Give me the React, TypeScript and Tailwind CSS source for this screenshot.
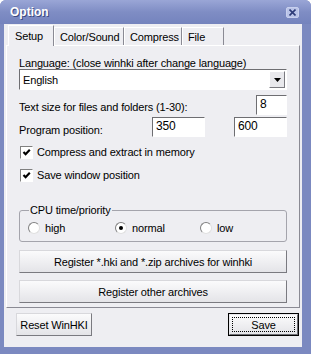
import type { ReactNode } from "react";

const font = { fontFamily: '"Liberation Sans", Arial, sans-serif' };

function Tab({ label, active, w }: { label: string; active?: boolean; w: string }) {
  return (
    <div
      className={
        active
          ? `${w} relative z-10 -mb-px h-[21px] border-l border-t border-r border-l-white border-t-white border-r-[#8a8a94] bg-[#eeeef2] pl-[6px] pt-[4px] leading-[13px]`
          : `${w} mt-[2px] h-[18px] border-t border-r border-l border-l-white border-t-white border-r-[#8a8a94] bg-[#eeeef2] pl-[5px] pt-[3px] leading-[13px]`
      }
    >
      {label}
    </div>
  );
}

function Field({ value, w }: { value: string; w: string }) {
  return (
    <div
      className={`${w} h-[20px] border border-t-[#6e6e72] border-l-[#6e6e72] border-r-white border-b-white bg-white pl-[3px] pt-px text-[12px] leading-[14px]`}
    >
      {value}
    </div>
  );
}

function Check({ label }: { label: string }) {
  return (
    <div className="flex h-[16px] items-center gap-[4px]">
      <div className="flex h-[13px] w-[13px] items-center justify-center border border-t-[#808080] border-l-[#808080] border-r-white border-b-white bg-white">
        <svg width="9" height="9" viewBox="0 0 9 9">
          <path d="M1.5 4 L3.6 6.2 L7.8 1.8" stroke="#000" strokeWidth="2.2" fill="none" />
        </svg>
      </div>
      <span className="leading-[14px]">{label}</span>
    </div>
  );
}

function Radio({ label, on }: { label: string; on?: boolean }) {
  return (
    <div className="flex h-[14px] items-center gap-[5px]">
      <div className="flex h-[12px] w-[12px] items-center justify-center rounded-full border border-t-[#808080] border-l-[#808080] border-r-[#e0e0e0] border-b-[#e0e0e0] bg-white">
        {on && <div className="h-[4px] w-[4px] rounded-full bg-black" />}
      </div>
      <span className="leading-[14px]">{label}</span>
    </div>
  );
}

function Button({ children, className = "" }: { children: ReactNode; className?: string }) {
  return (
    <div
      className={`flex h-[23px] items-center justify-center whitespace-nowrap border border-t-[#d8d8dc] border-l-[#d8d8dc] border-r-[#7a7a80] border-b-[#7a7a80] bg-gradient-to-b from-[#fbfbfc] to-[#e4e4e8] leading-[14px] ${className}`}
    >
      {children}
    </div>
  );
}

export default function App() {
  return (
    <div style={font} className="flex h-[354px] w-[311px] flex-col overflow-hidden rounded-t-[6px] bg-[#7b89c0]">
      {/* title bar */}
      <div className="flex h-[24px] items-center justify-between bg-gradient-to-b from-[#9aa6d6] via-[#7f8dc4] to-[#7483bd] pl-[10px] pr-[12px]">
        <span className="text-[12px] font-bold text-white [text-shadow:1px_1px_0_#3c4a80]">Option</span>
        <div className="flex h-[11px] w-[13px] items-center justify-center rounded-[2px] border border-[#c8d0ee] bg-[#b9c3e8]">
          <svg width="7" height="7" viewBox="0 0 7 7">
            <path d="M0.5 0.5 L6.5 6.5 M6.5 0.5 L0.5 6.5" stroke="#2e3c78" strokeWidth="1.6" />
          </svg>
        </div>
      </div>

      {/* client */}
      <div className="ml-[4px] mr-[9px] mb-[7px] flex flex-1 flex-col bg-[#eeeef2] px-[2px] text-[11px] tracking-[-0.15px] text-black">
        {/* tabs */}
        <div className="flex items-start pl-[2px] pt-px">
          <Tab label="Setup" active w="w-[46px]" />
          <Tab label="Color/Sound" w="w-[70px]" />
          <Tab label="Compress" w="w-[58px]" />
          <Tab label="File" w="w-[42px]" />
        </div>

        {/* panel */}
        <div className="flex flex-col border border-t-white border-l-white border-r-[#8a8a94] border-b-[#8a8a94] pl-[12px] pr-[12px] pt-[11px] pb-[4px]">
          <div className="h-[13px] leading-[13px]">Language: (close winhki after change language)</div>
          <div className="-mt-px flex h-[21px] items-center border border-t-[#6e6e72] border-l-[#6e6e72] border-r-white border-b-white bg-white">
            <span className="flex-1 pl-[3px] leading-[14px]">English</span>
            <div className="mr-px flex h-[17px] w-[16px] items-center justify-center border border-t-white border-l-white border-r-[#7a7a80] border-b-[#7a7a80] bg-[#e8e8ec]">
              <svg width="7" height="4" viewBox="0 0 7 4">
                <path d="M0 0 L7 0 L3.5 4 Z" fill="#000" />
              </svg>
            </div>
          </div>

          <div className="mt-[5px] flex items-start justify-between">
            <span className="pt-[5px] leading-[14px]">Text size for files and folders (1-30):</span>
            <Field value="8" w="w-[31px]" />
          </div>

          <div className="mt-[2px] flex items-start">
            <span className="flex-1 pt-[6px] leading-[14px]">Program position:</span>
            <Field value="350" w="w-[53px]" />
            <div className="w-[29px]" />
            <Field value="600" w="w-[53px]" />
          </div>

          <div className="mt-[7px] pl-px">
            <Check label="Compress and extract in memory" />
          </div>
          <div className="mt-[7px] pl-px">
            <Check label="Save window position" />
          </div>

          <fieldset className="mt-[21px] h-[38px] rounded-[3px] border border-[#a4a4ac] pl-[8px]">
            <legend className="ml-[1px] px-px leading-[13px]">CPU time/priority</legend>
            <div className="mt-[4px] flex">
              <div className="w-[87px]">
                <Radio label="high" />
              </div>
              <div className="w-[85px]">
                <Radio label="normal" on />
              </div>
              <Radio label="low" />
            </div>
          </fieldset>

          <Button className="mt-[8px]">Register *.hki and *.zip archives for winhki</Button>
          <Button className="mt-[7px]">Register other archives</Button>
        </div>

        {/* bottom buttons */}
        <div className="mt-[5px] flex justify-between pl-[10px] pr-px">
          <Button className="w-[76px]">Reset WinHKI</Button>
          <div className="h-[23px] w-[71px] border border-black">
            <div className="flex h-full items-center justify-center border border-t-[#e8e8ec] border-l-[#e8e8ec] border-r-[#6e6e74] border-b-[#6e6e74] bg-gradient-to-b from-[#fbfbfc] to-[#e4e4e8] p-[2px]">
              <div className="flex h-full w-full items-center justify-center border border-dotted border-black leading-[14px]">
                Save
              </div>
            </div>
          </div>
        </div>
      </div>
    </div>
  );
}
